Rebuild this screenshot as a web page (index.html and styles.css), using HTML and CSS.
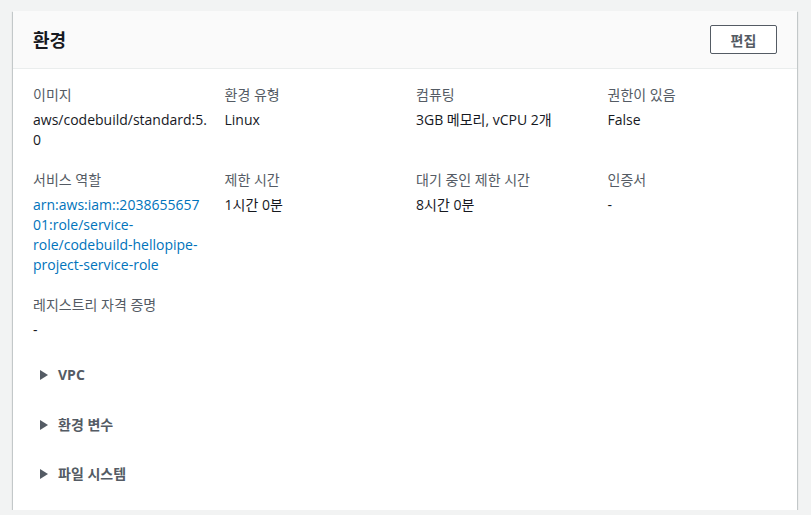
FILE: index.html
```html
<!DOCTYPE html>
<html lang="ko">
<head>
<meta charset="utf-8">
<link rel="stylesheet" href="styles.css">
</head>
<body>
<div class="card">
  <div class="card-header">
    <h2 class="title">환경</h2>
    <button class="btn">편집</button>
  </div>
  <div class="card-body">
    <div class="grid">
      <div class="field"><div class="label">이미지</div><div class="value">aws/codebuild/standard:5.0</div></div>
      <div class="field"><div class="label">환경 유형</div><div class="value">Linux</div></div>
      <div class="field"><div class="label">컴퓨팅</div><div class="value">3GB 메모리, vCPU 2개</div></div>
      <div class="field"><div class="label">권한이 있음</div><div class="value">False</div></div>
      <div class="field"><div class="label">서비스 역할</div><div class="value"><a class="link" href="#">arn:aws:iam::203865565701:role/service-role/codebuild-hellopipe-project-service-role</a></div></div>
      <div class="field"><div class="label">제한 시간</div><div class="value">1시간 0분</div></div>
      <div class="field"><div class="label">대기 중인 제한 시간</div><div class="value">8시간 0분</div></div>
      <div class="field"><div class="label">인증서</div><div class="value">-</div></div>
      <div class="field"><div class="label">레지스트리 자격 증명</div><div class="value">-</div></div>
    </div>
    <div class="expanders">
      <div class="expander"><span class="caret"></span><span class="exp-text">VPC</span></div>
      <div class="expander"><span class="caret"></span><span class="exp-text">환경 변수</span></div>
      <div class="expander"><span class="caret"></span><span class="exp-text">파일 시스템</span></div>
    </div>
  </div>
</div>
</body>
</html>
```
FILE: styles.css
```css
html, body {
  margin: 0;
  padding: 0;
  background: #f2f3f3;
}
body {
  font-family: "Open Sans", "Noto Sans CJK KR", sans-serif;
  font-size: 14px;
  line-height: 20px;
  color: #16191f;
  padding: 11px 14px 0 13px;
}
.card {
  background: #ffffff;
  box-shadow: 0 1px 1px 0 rgba(0, 28, 36, 0.3), 1px 1px 1px 0 rgba(0, 28, 36, 0.15), -1px 1px 1px 0 rgba(0, 28, 36, 0.15);
  height: 499px;
}
.card-header {
  background: #fafafa;
  border-bottom: 1px solid #eaeded;
  height: 57px;
  display: flex;
  align-items: center;
  justify-content: space-between;
  padding: 0 20px;
}
.title {
  margin: 0;
  font-size: 18px;
  line-height: 24px;
  font-weight: 700;
  color: #16191f;
  padding-top: 1px;
}
.btn {
  font-family: inherit;
  font-size: 14px;
  font-weight: 700;
  color: #545b64;
  background: #ffffff;
  border: 1px solid #545b64;
  border-radius: 2px;
  width: 67px;
  height: 29px;
  padding: 0;
  margin-right: 0;
}
.card-body {
  padding: 16px 17px 0 20px;
}
.grid {
  display: grid;
  grid-template-columns: repeat(4, 174px);
  column-gap: 17.5px;
  row-gap: 20px;
}
.label {
  color: #545b64;
  margin-bottom: 5px;
}
.value {
  overflow-wrap: break-word;
  word-break: break-word;
}
.link {
  color: #0073bb;
  text-decoration: none;
}
.expanders {
  padding-top: 25px;
}
.expander {
  display: flex;
  align-items: center;
  height: 20px;
  margin-bottom: 29.5px;
  padding-left: 7px;
  font-weight: 700;
  color: #545b64;
}
.caret {
  width: 0;
  height: 0;
  border-top: 5px solid transparent;
  border-bottom: 5px solid transparent;
  border-left: 8px solid #545b64;
  margin-right: 10px;
}
.exp-text {
  color: #545b64;
}
```
